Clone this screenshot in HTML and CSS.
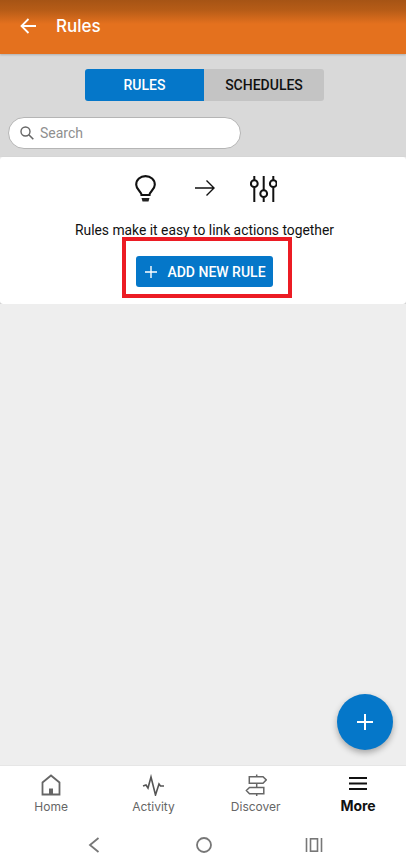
FILE: index.html
```html
<!DOCTYPE html>
<html lang="en">
<head>
<meta charset="utf-8">
<title>Rules</title>
<link rel="stylesheet" href="styles.css">
</head>
<body>
<div class="app">
  <header class="topbar">
    <svg class="back" width="16" height="16" viewBox="0 0 16 16"><path d="M16 8H2M8.500 1L1.500 8L8.500 15" fill="none" stroke="#fff" stroke-width="1.800"/></svg>
    <h1 class="title">Rules</h1>
  </header>
  <section class="controls">
    <div class="tabs">
      <div class="tab tab-active">RULES</div>
      <div class="tab">SCHEDULES</div>
    </div>
    <div class="search">
      <svg width="14" height="14" viewBox="0 0 14 14"><circle cx="5.500" cy="5.500" r="4.500" fill="none" stroke="#666" stroke-width="1.400"/><path d="M8.800 8.800L13.300 13.300" stroke="#666" stroke-width="1.600"/></svg>
      <span class="search-text">Search</span>
    </div>
  </section>
  <section class="card">
    <div class="card-icons">
      <svg class="icon-bulb" width="21" height="27" viewBox="0 0 21 27"><path d="M6.500 20C6.500 16.500 1.200 14.500 1.200 9.700C1.200 4.600 5.300 1.100 10.500 1.100C15.700 1.100 19.800 4.600 19.800 9.700C19.800 14.500 14.500 16.500 14.500 20Z" fill="none" stroke="#111" stroke-width="2.100"/><path d="M6.500 23H14.500L13.500 26.500H7.500Z" fill="#222"/></svg>
      <svg class="icon-arrow" width="20" height="16" viewBox="0 0 20 16"><path d="M0 8H19M11.500 0.500L19 8L11.500 15.500" fill="none" stroke="#111" stroke-width="1.400"/></svg>
      <svg class="icon-sliders" width="27" height="26" viewBox="0 0 27 26" fill="none" stroke="#111" stroke-width="2"><path d="M4.300 0V4M4.300 11.400V26M13.700 0V14M13.700 21.400V26M23.300 0V4M23.300 11.400V26"/><circle cx="4.300" cy="7.700" r="3.400"/><circle cx="13.700" cy="17.700" r="3.400"/><circle cx="23.300" cy="7.700" r="3.400"/></svg>
    </div>
    <p class="card-text">Rules make it easy to link actions together</p>
    <div class="highlight">
      <div class="add-btn">
        <svg width="12" height="12" viewBox="0 0 12 12"><path d="M6 0V12M0 6H12" stroke="#fff" stroke-width="1.400"/></svg>
        <span>ADD NEW RULE</span>
      </div>
    </div>
  </section>
  <main class="empty"></main>
  <div class="fab"><svg width="16" height="16" viewBox="0 0 16 16"><path d="M8 0V16M0 8H16" stroke="#fff" stroke-width="2"/></svg></div>
  <nav class="bottom">
    <div class="nav-item">
      <svg width="22" height="22" viewBox="0 0 22 22" fill="none" stroke="#666" stroke-width="1.800"><path d="M2.500 20.500V8.500L11 1.500L19.500 8.500V20.500Z"/><path d="M9 20.500V14.500H13V20.500" fill="#666" stroke="none"/></svg>
      <span>Home</span>
    </div>
    <div class="nav-item">
      <svg width="24" height="22" viewBox="0 0 24 22" fill="none" stroke="#555" stroke-width="1.600"><path d="M2 12L5 11L7 14L10 3L14.500 21L18 10L19.500 12H23"/></svg>
      <span>Activity</span>
    </div>
    <div class="nav-item">
      <svg width="22" height="22" viewBox="0 0 22 22" fill="none" stroke="#666" stroke-width="1.500"><path d="M4.300 2.700H18L21.300 5.900L18 9.200H4.300ZM18.800 13.400H4.500L1.400 16.500L4.500 19.700H18.800ZM11.700 0.500V2.700M11.700 9.200V13.400M11.700 19.700V22"/></svg>
      <span>Discover</span>
    </div>
    <div class="nav-item nav-current">
      <svg width="20" height="22" viewBox="0 0 20 22" stroke="#111" stroke-width="2"><path d="M1 4H19M1 9.500H19M1 15H19"/></svg>
      <span>More</span>
    </div>
  </nav>
  <div class="system">
    <svg width="12" height="16" viewBox="0 0 12 16"><path d="M10.500 1L2 8L10.500 15" fill="none" stroke="#777" stroke-width="1.800"/></svg>
    <svg width="18" height="18" viewBox="0 0 18 18"><circle cx="9" cy="9" r="7" fill="none" stroke="#777" stroke-width="1.800"/></svg>
    <svg width="18" height="16" viewBox="0 0 18 16" fill="none" stroke="#777" stroke-width="1.600"><path d="M1.500 1V15M16.500 1V15"/><rect x="5.500" y="1.800" width="7" height="12.400"/></svg>
  </div>
</div>
</body>
</html>
```
FILE: styles.css
```css
* { box-sizing: border-box; }
html, body { margin: 0; padding: 0; }
body { font-family: Roboto, sans-serif; background: #eee; }
.app { position: relative; width: 406px; height: 865px; display: flex; flex-direction: column; overflow: hidden; }
.topbar { height: 54px; flex: none; display: flex; align-items: center; padding: 0 0 2px 20px; gap: 20px; background: linear-gradient(#a65415 0, #b65c17 10px, #e4711e 24px, #e4711e 100%); box-shadow: 0 1px 2px rgba(0,0,0,.2); z-index: 1; }
.back { flex: none; }
.title { margin: 0; font: 500 17px Inter, sans-serif; color: #fff; }
.controls { height: 103px; flex: none; background: #d9d9d9; padding: 15px 0 0 8px; }
.tabs { display: flex; width: 239px; height: 32px; margin-left: 77px; border-radius: 3px; overflow: hidden; }
.tab { flex: 1; display: flex; align-items: center; justify-content: center; background: #c4c4c4; color: #111; font-size: 14px; font-weight: 500; }
.tab-active { flex: none; width: 119px; background: #0577c9; color: #fff; }
.search { width: 233px; height: 32px; margin-top: 16px; display: flex; align-items: center; gap: 6px; padding-left: 11px; background: #fff; border: 1px solid #b5b5b5; border-radius: 16px; }
.search-text { font-size: 14px; color: #8f8f8f; }
.card { flex: none; height: 147px; background: #fff; display: flex; flex-direction: column; align-items: center; box-shadow: 0 1px 2px rgba(0,0,0,.25); border-radius: 3px; }
.card-icons { display: flex; align-items: flex-start; height: 26px; margin: 18px 0 0 6px; }
.icon-arrow { margin: 5px 35px 0 39px; }
.icon-sliders { margin-top: 1px; }
.card-text { margin: 19px 0 0 3px; font-size: 13.850px; line-height: 20px; color: #111; }
.highlight { width: 170px; height: 61px; margin: -3px 0 0 8px; border: 4px solid #ec1c24; display: flex; align-items: flex-end; justify-content: center; padding: 0 6px 7px 0; }
.add-btn { width: 137px; height: 31px; flex: none; display: flex; align-items: center; justify-content: center; gap: 10px; background: #0577c9; border-radius: 3px; color: #fff; font-size: 14px; font-weight: 500; white-space: nowrap; padding-left: 3px; }
.empty { flex: 1; background: #eee; }
.fab { position: absolute; left: 337px; top: 694px; width: 56px; height: 56px; border-radius: 50%; background: #0577c9; display: flex; align-items: center; justify-content: center; box-shadow: 0 3px 6px rgba(0,0,0,.3); }
.bottom { flex: none; height: 60px; background: #fff; display: grid; grid-template-columns: repeat(4, 102.300px); border-top: 1px solid #e6e6e6; padding-top: 8px; }
.nav-item { display: flex; flex-direction: column; align-items: center; gap: 3px; font: 400 12px Inter, sans-serif; color: #666; }
.nav-current { color: #111; font-weight: 700; font-size: 14px; gap: 1px; }
.system { flex: none; height: 40px; background: #fff; display: grid; grid-template-columns: repeat(3, 110px); justify-content: center; justify-items: center; align-items: center; padding-left: 2px; }
```
